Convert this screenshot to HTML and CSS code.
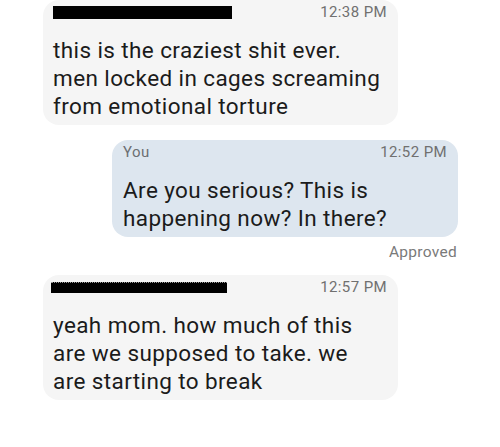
FILE: index.html
```html
<!DOCTYPE html>
<html>
<head>
<meta charset="utf-8">
<link rel="stylesheet" href="styles.css">
</head>
<body>
<div class="thread">
  <div class="bubble in">
    <div class="meta">
      <span class="redact r1"></span>
      <span class="time">12:38 PM</span>
    </div>
    <div class="text">this is the craziest shit ever.<br>men locked in cages screaming<br>from emotional torture</div>
  </div>

  <div class="bubble out">
    <div class="meta">
      <span class="sender">You</span>
      <span class="time">12:52 PM</span>
    </div>
    <div class="text">Are you serious? This is<br>happening now? In there?</div>
  </div>
  <div class="status">Approved</div>

  <div class="bubble in">
    <div class="meta">
      <span class="redact r2"></span>
      <span class="time">12:57 PM</span>
    </div>
    <div class="text">yeah mom. how much of this<br>are we supposed to take. we<br>are starting to break</div>
  </div>
</div>
</body>
</html>
```

FILE: styles.css
```css
html, body {
  margin: 0;
  padding: 0;
  background: #ffffff;
}
body {
  font-family: Roboto, "Liberation Sans", sans-serif;
  color: #1b1b1b;
}
.thread {
  display: flex;
  flex-direction: column;
  padding: 0 42px 0 43px;
}
.bubble {
  box-sizing: border-box;
  border-radius: 16px;
  padding: 2px 11px 5px 10px;
}
.bubble.in {
  background: #f5f5f5;
  width: 355px;
  align-self: flex-start;
}
.bubble.out {
  background: #dde6ef;
  width: 346px;
  align-self: flex-end;
  margin-top: 15px;
  padding-left: 11px;
}
.status + .bubble.in { margin-top: 13px; }
.meta {
  display: flex;
  justify-content: space-between;
  align-items: center;
  height: 20px;
  font-size: 15px;
  line-height: 20px;
  letter-spacing: 0.4px;
  color: #707070;
  margin-bottom: 14px;
}
.sender { color: #6c6f72; }
.redact {
  display: block;
  background: #000;
}
.r1 { width: 179px; height: 13px; margin-top: 1px; }
.r2 { width: 176px; height: 10px; margin-left: -2px; border-top: 1px dotted #9a9a9a; }
.text {
  font-size: 22.5px;
  line-height: 28px;
  letter-spacing: 0.4px;
}
.status {
  align-self: flex-end;
  font-size: 15.5px;
  line-height: 20px;
  letter-spacing: 0.3px;
  color: #7a7a7a;
  margin-top: 5px;
  margin-right: 1px;
}
```
